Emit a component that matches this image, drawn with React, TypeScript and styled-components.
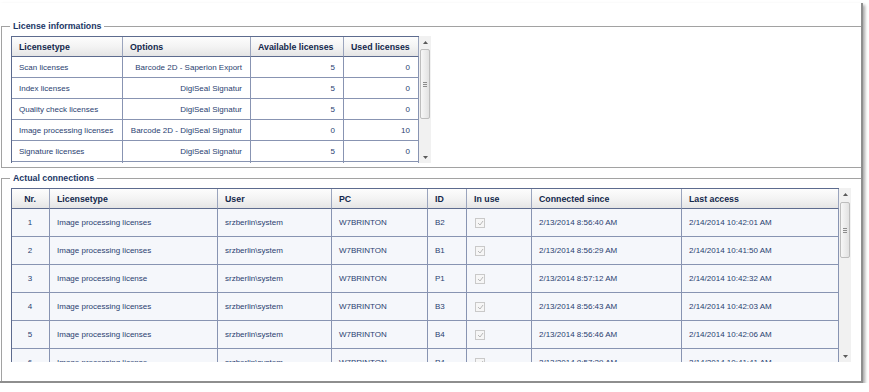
import React from 'react';
import styled, { createGlobalStyle } from 'styled-components';

const GlobalStyle = createGlobalStyle`
  html, body { margin: 0; padding: 0; background: #ffffff; }
  body { font-family: "Liberation Sans", Arial, sans-serif; }
  * { box-sizing: border-box; }
`;

const GRID = '#8894b2';
const OUTLINE = '#5d6b8e';
const TEXT = '#2a4170';
const HEAD_TEXT = '#13284c';

const Window = styled.div`
  box-sizing: content-box;
  width: 860px;
  height: 361px;
  margin-top: 3px;
  padding: 17px 0 0 1px;
  border-right: 2px solid #8e8e8e;
  border-bottom: 2px solid #8e8e8e;
  box-shadow: 2px 2px 3px rgba(0, 0, 0, 0.35);
  background: #ffffff;
  display: flex;
  flex-direction: column;
`;

const GroupBox = styled.fieldset<{ $grow?: boolean; $gap?: number }>`
  margin: ${(p) => p.$gap ?? 0}px 0 0 0;
  padding: 3px 0 ${(p) => (p.$grow ? 0 : 4)}px 9px;
  border: 1px solid #a2a2a2;
  border-right: none;
  ${(p) => (p.$grow ? 'border-bottom: none; flex: 1;' : '')}
  min-width: 0;
`;

const Legend = styled.legend`
  margin-left: -1px;
  padding: 0 3px;
  height: 13px;
  line-height: 13px;
  font-size: 8.8px;
  font-weight: bold;
  color: #1b3766;
`;

const ListView = styled.div<{ $width: number; $height: number }>`
  display: grid;
  grid-template-columns: ${(p) => p.$width}px 12px;
  height: ${(p) => p.$height}px;
  width: ${(p) => p.$width + 12}px;
`;

const Viewport = styled.div`
  overflow: hidden;
  border-left: 1px solid ${OUTLINE};
  border-top: 1px solid ${OUTLINE};
`;

const Row = styled.div<{ $cols: string; $height: number; $bg: string }>`
  display: grid;
  grid-template-columns: ${(p) => p.$cols};
  height: ${(p) => p.$height}px;
  background: ${(p) => p.$bg};
`;

const HeaderRow = styled(Row)`
  background: linear-gradient(#fdfdfd 0%, #f3f3f3 50%, #e3e3e3 100%);
`;

const Cell = styled.div<{ $align?: string }>`
  display: flex;
  align-items: center;
  justify-content: ${(p) =>
    p.$align === 'right' ? 'flex-end' : p.$align === 'center' ? 'center' : 'flex-start'};
  padding: 0 8px 0 7px;
  border-right: 1px solid ${GRID};
  border-bottom: 1px solid ${GRID};
  font-size: 8px;
  color: ${TEXT};
  white-space: nowrap;
  overflow: hidden;
`;

const HeadCell = styled(Cell)`
  font-size: 8.8px;
  font-weight: bold;
  color: ${HEAD_TEXT};
  border-bottom-color: ${OUTLINE};
  border-right-color: #9aa4bd;
`;

const CheckBox = styled.span`
  display: inline-flex;
  align-items: center;
  justify-content: center;
  width: 10px;
  height: 10px;
  margin-left: 1px;
  border: 1px solid #c9c9c9;
  background: #f6f6f6;
`;

const Track = styled.div`
  display: flex;
  flex-direction: column;
  align-items: center;
  background: #f1f1f1;
`;

const ArrowBox = styled.div`
  height: 12px;
  width: 12px;
  display: flex;
  align-items: center;
  justify-content: center;
  flex: none;
`;

const Thumb = styled.div<{ $top: number; $height: number }>`
  margin-top: ${(p) => p.$top}px;
  height: ${(p) => p.$height}px;
  width: 10px;
  flex: none;
  border: 1px solid #bdbdbd;
  border-radius: 2px;
  background: linear-gradient(to right, #f7f7f7, #e2e2e2);
  display: flex;
  flex-direction: column;
  align-items: center;
  justify-content: center;
  gap: 1px;
`;

const Grip = styled.span`
  display: block;
  width: 4px;
  height: 1px;
  background: #8c8c8c;
`;

const Spacer = styled.div`
  flex: 1;
`;

const Arrow = ({ down }: { down?: boolean }) => (
  <ArrowBox>
    <svg width="5" height="3" viewBox="0 0 5 3">
      <polygon points={down ? '0,0 5,0 2.5,3' : '0,3 5,3 2.5,0'} fill="#5a5a5a" />
    </svg>
  </ArrowBox>
);

const ScrollBar = ({ top, height }: { top: number; height: number }) => (
  <Track>
    <Arrow />
    <Thumb $top={top} $height={height}>
      <Grip />
      <Grip />
      <Grip />
    </Thumb>
    <Spacer />
    <Arrow down />
  </Track>
);

const Check = () => (
  <CheckBox>
    <svg width="7" height="6" viewBox="0 0 7 6">
      <polyline points="1,3 3,5 6,1" fill="none" stroke="#b8b8b8" strokeWidth="1" />
    </svg>
  </CheckBox>
);

type Col = { title: string; align?: string; headAlign?: string };

const licCols = '111px 128px 93px 75px';
const licHeaders: Col[] = [
  { title: 'Licensetype' },
  { title: 'Options', align: 'right' },
  { title: 'Available licenses', align: 'right' },
  { title: 'Used licenses', align: 'right' },
];
const licRows = [
  ['Scan licenses', 'Barcode 2D - Saperion Export', '5', '0'],
  ['Index licenses', 'DigiSeal Signatur', '5', '0'],
  ['Quality check licenses', 'DigiSeal Signatur', '5', '0'],
  ['Image processing licenses', 'Barcode 2D - DigiSeal Signatur', '0', '10'],
  ['Signature licenses', 'DigiSeal Signatur', '5', '0'],
  ['Export licenses', 'Saperion Export', '5', '0'],
];

const conCols = '38px 168px 114px 96px 39px 65px 150px 157px';
const conHeaders: Col[] = [
  { title: 'Nr.', align: 'center', headAlign: 'center' },
  { title: 'Licensetype' },
  { title: 'User' },
  { title: 'PC' },
  { title: 'ID' },
  { title: 'In use' },
  { title: 'Connected since' },
  { title: 'Last access' },
];
const conRows = [
  ['1', 'Image processing licenses', 'srzberlin\\system', 'W7BRINTON', 'B2', '', '2/13/2014 8:56:40 AM', '2/14/2014 10:42:01 AM'],
  ['2', 'Image processing licenses', 'srzberlin\\system', 'W7BRINTON', 'B1', '', '2/13/2014 8:56:29 AM', '2/14/2014 10:41:50 AM'],
  ['3', 'Image processing license', 'srzberlin\\system', 'W7BRINTON', 'P1', '', '2/13/2014 8:57:12 AM', '2/14/2014 10:42:32 AM'],
  ['4', 'Image processing licenses', 'srzberlin\\system', 'W7BRINTON', 'B3', '', '2/13/2014 8:56:43 AM', '2/14/2014 10:42:03 AM'],
  ['5', 'Image processing licenses', 'srzberlin\\system', 'W7BRINTON', 'B4', '', '2/13/2014 8:56:46 AM', '2/14/2014 10:42:06 AM'],
  ['6', 'Image processing license', 'srzberlin\\system', 'W7BRINTON', 'P4', '', '2/13/2014 8:57:29 AM', '2/14/2014 10:41:41 AM'],
];

export default function App() {
  return (
    <>
      <GlobalStyle />
      <Window>
        <GroupBox>
          <Legend>License informations</Legend>
          <ListView $width={408} $height={127}>
            <Viewport>
              <HeaderRow $cols={licCols} $height={20} $bg="#fff">
                {licHeaders.map((h) => (
                  <HeadCell key={h.title} $align={h.headAlign}>
                    {h.title}
                  </HeadCell>
                ))}
              </HeaderRow>
              {licRows.map((r, i) => (
                <Row key={i} $cols={licCols} $height={21} $bg="#ffffff">
                  {r.map((v, j) => (
                    <Cell key={j} $align={licHeaders[j].align}>
                      {v}
                    </Cell>
                  ))}
                </Row>
              ))}
            </Viewport>
            <ScrollBar top={1} height={70} />
          </ListView>
        </GroupBox>
        <GroupBox $grow $gap={4}>
          <Legend>Actual connections</Legend>
          <ListView $width={828} $height={174}>
            <Viewport>
              <HeaderRow $cols={conCols} $height={20} $bg="#fff">
                {conHeaders.map((h) => (
                  <HeadCell key={h.title} $align={h.headAlign}>
                    {h.title}
                  </HeadCell>
                ))}
              </HeaderRow>
              {conRows.map((r, i) => (
                <Row key={i} $cols={conCols} $height={28} $bg="#f5f7fb">
                  {r.map((v, j) => (
                    <Cell key={j} $align={conHeaders[j].align}>
                      {j === 5 ? <Check /> : v}
                    </Cell>
                  ))}
                </Row>
              ))}
            </Viewport>
            <ScrollBar top={2} height={56} />
          </ListView>
        </GroupBox>
      </Window>
    </>
  );
}
